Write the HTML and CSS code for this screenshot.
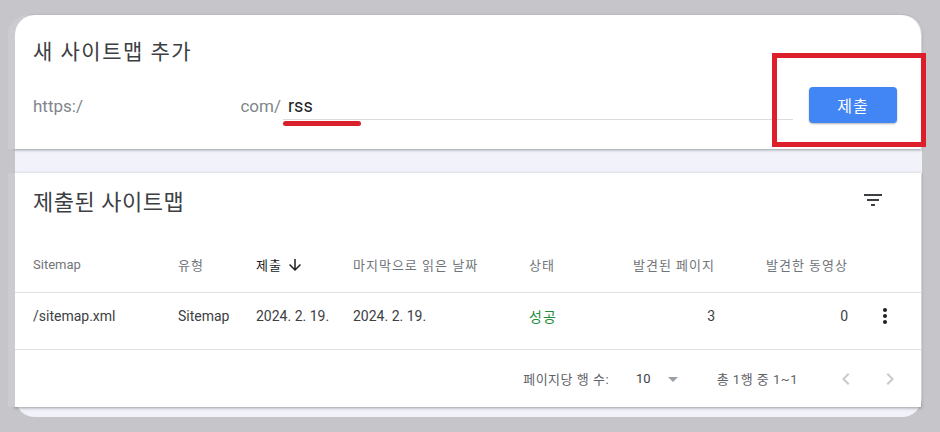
FILE: index.html
```html
<!DOCTYPE html>
<html lang="ko">
<head>
    <meta charset="UTF-8">
    <meta name="viewport" content="width=device-width, initial-scale=1.0">
    <title>Sitemaps</title>
    <link rel="stylesheet" href="styles.css">
</head>
<body>
    <div class="frame">
        <section class="card add-card">
            <h2 class="card-title">새 사이트맵 추가</h2>
            <div class="add-row">
                <div class="prefix"><span>https:/</span><span>com/</span></div>
                <div class="field">
                    <span class="field-value">rss</span>
                    <span class="mark-line"></span>
                </div>
                <button type="button" class="btn-submit">제출</button>
            </div>
            <div class="mark-box"></div>
        </section>

        <section class="card list-card">
            <div class="list-head">
                <h2 class="card-title big">제출된 사이트맵</h2>
                <svg class="filter-icon" width="24" height="24" viewBox="0 0 24 24"><path d="M10 18h4v-2h-4v2zM3 6v2h18V6H3zm3 7h12v-2H6v2z" fill="#3c4043"/></svg>
            </div>

            <div class="trow thead">
                <span>Sitemap</span>
                <span class="ko">유형</span>
                <span class="sorted ko">제출
                    <svg width="18" height="18" viewBox="0 0 24 24"><path d="M20 12l-1.41-1.41L13 16.17V4h-2v12.17l-5.58-5.59L4 12l8 8 8-8z" fill="#202124"/></svg>
                </span>
                <span class="ko">마지막으로 읽은 날짜</span>
                <span class="ko">상태</span>
                <span class="num ko">발견된 페이지</span>
                <span class="num ko">발견한 동영상</span>
                <span></span>
            </div>

            <div class="trow tbody">
                <span>/sitemap.xml</span>
                <span>Sitemap</span>
                <span>2024. 2. 19.</span>
                <span>2024. 2. 19.</span>
                <span class="ok ko">성공</span>
                <span class="num">3</span>
                <span class="num">0</span>
                <span class="more">
                    <svg width="24" height="24" viewBox="0 0 24 24"><path d="M12 8c1.1 0 2-.9 2-2s-.9-2-2-2-2 .9-2 2 .9 2 2 2zm0 2c-1.1 0-2 .9-2 2s.9 2 2 2 2-.9 2-2-.9-2-2-2zm0 6c-1.1 0-2 .9-2 2s.9 2 2 2 2-.9 2-2-.9-2-2-2z" fill="#202124"/></svg>
                </span>
            </div>

            <div class="pager">
                <span class="pk">페이지당 행 수:</span>
                <div class="per-page">
                    <span>10</span>
                    <svg width="24" height="24" viewBox="0 0 24 24"><path d="M7 10l5 5 5-5z" fill="#9aa0a6"/></svg>
                </div>
                <span class="range pk">총 1행 중 1~1</span>
                <div class="nav">
                    <svg width="24" height="24" viewBox="0 0 24 24"><path d="M15.41 7.41L14 6l-6 6 6 6 1.41-1.41L10.83 12z" fill="#c7c9cc"/></svg>
                    <svg width="24" height="24" viewBox="0 0 24 24"><path d="M8.59 16.59L10 18l6-6-6-6-1.41 1.41L13.17 12z" fill="#c7c9cc"/></svg>
                </div>
            </div>
        </section>
    </div>
</body>
</html>
```

FILE: styles.css
```css
* {
    margin: 0;
    padding: 0;
    box-sizing: border-box;
}
body {
    font-family: Roboto, "Noto Sans CJK KR", sans-serif;
    color: #3c4043;
    background: #c5c5ca;
}
.frame {
    width: 907px;
    height: 402px;
    margin: 15px 0 0 15px;
    background: #f1f2fa;
    border-radius: 20px;
    display: flex;
    flex-direction: column;
    gap: 24px;
}
.card {
    position: relative;
    width: 906px;
    background: #fff;
    box-shadow: -7px 0 0 #cbcbd0, 0 1px 2px rgba(60,64,67,0.3), 0 1px 3px 1px rgba(60,64,67,0.15);
}
.card-title {
    font-size: 21px;
    font-weight: 400;
    line-height: 28px;
    letter-spacing: 1.5px;
    color: #3c4043;
}
.card-title.big {
    font-size: 22px;
    letter-spacing: 0.5px;
}
.ko {
    letter-spacing: 1px;
}
.pk {
    letter-spacing: 0.5px;
}

/* 새 사이트맵 추가 */
.add-card {
    height: 134px;
    padding: 23px 24px 0 18px;
    border-radius: 20px 20px 0 0;
}
.add-row {
    display: flex;
    align-items: flex-end;
    height: 36px;
    margin-top: 21px;
}
.prefix,
.field {
    display: flex;
    align-items: center;
    height: 30px;
    padding-top: 2px;
    margin-bottom: 3px;
}
.prefix {
    width: 250px;
    justify-content: space-between;
    padding-right: 2px;
    font-size: 17px;
    color: #80868b;
}
.field {
    position: relative;
    flex: 1;
    margin-right: 16px;
    padding-left: 5px;
    border-bottom: 1px solid #dadce0;
}
.field-value {
    font-size: 18px;
    color: #202124;
}
.mark-line {
    position: absolute;
    left: 0;
    bottom: -7px;
    width: 78px;
    height: 5px;
    border-radius: 3px;
    background: #d9212c;
}
.btn-submit {
    width: 88px;
    height: 36px;
    border: none;
    border-radius: 4px;
    background: #4285f4;
    color: #fff;
    font-family: inherit;
    font-size: 16px;
    letter-spacing: 1px;
    box-shadow: 0 1px 2px rgba(0,0,0,0.3);
}
.mark-box {
    position: absolute;
    left: 757px;
    top: 38px;
    width: 154px;
    height: 94px;
    border: 5px solid #dd1f2b;
}

/* 제출된 사이트맵 */
.list-card {
    height: 234px;
}
.list-head {
    display: flex;
    justify-content: space-between;
    align-items: center;
    height: 60px;
    padding: 0 36px 0 18px;
}
.filter-icon {
    margin-bottom: 6px;
}
.trow {
    display: grid;
    grid-template-columns: 145px 78px 97px 176px 91px 95px 133px 1fr;
    align-items: center;
    padding-left: 18px;
    border-bottom: 1px solid #e0e0e0;
}
.thead {
    height: 60px;
    padding-top: 4px;
    font-size: 13px;
    color: #70757a;
}
.sorted {
    display: flex;
    align-items: center;
    gap: 4px;
    color: #202124;
}
.tbody {
    height: 57px;
    padding-bottom: 10px;
    font-size: 14px;
    color: #3c4043;
}
.num {
    text-align: right;
}
.ok {
    color: #1e8e3e;
}
.more {
    display: flex;
    justify-content: center;
}
.more svg {
    display: block;
}
.pager {
    display: flex;
    align-items: center;
    justify-content: flex-end;
    height: 57px;
    padding-right: 19px;
    font-size: 13px;
    color: #5f6368;
}
.per-page {
    display: flex;
    align-items: center;
    gap: 10px;
    margin-left: 27px;
    color: #3c4043;
}
.range {
    margin-left: 32px;
}
.nav {
    display: flex;
    gap: 20px;
    margin-left: 36px;
}
.nav svg,
.per-page svg {
    display: block;
}
```
